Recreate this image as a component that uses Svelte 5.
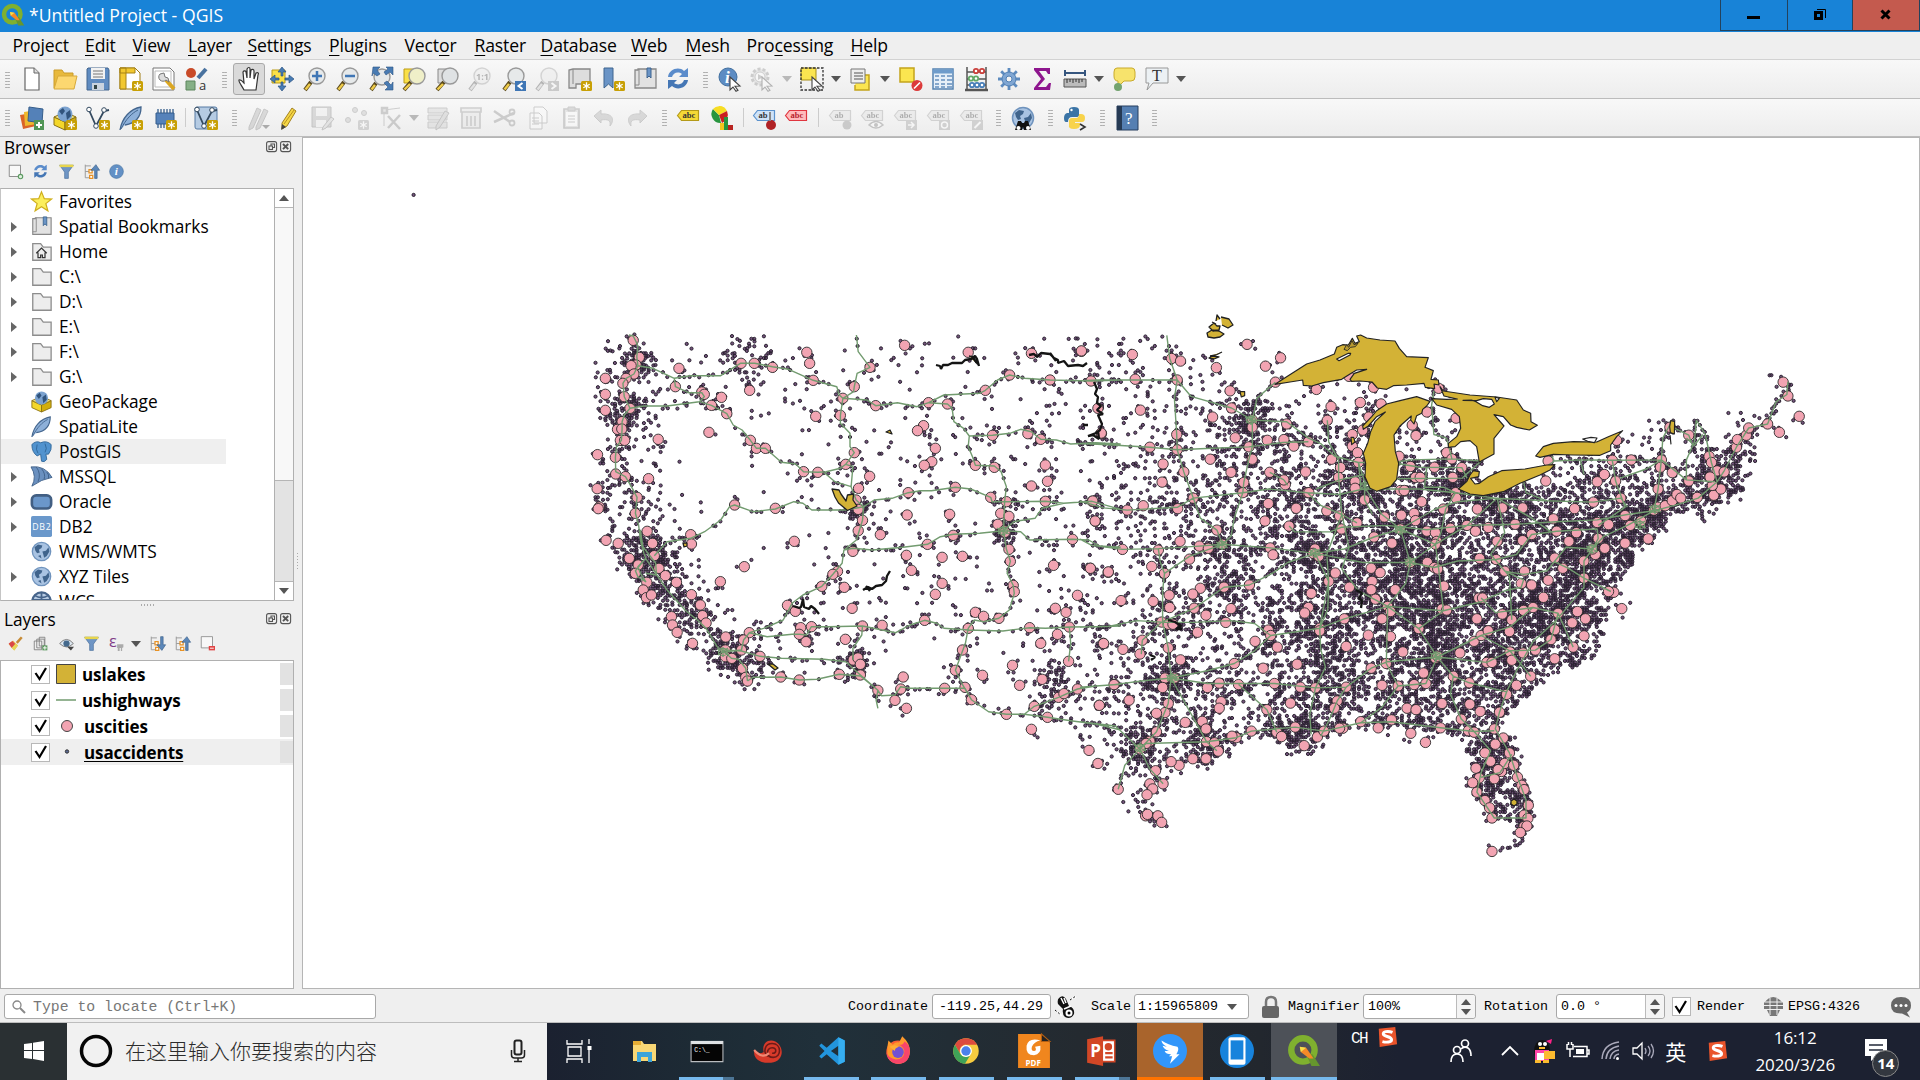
<script>
  // ---------- icon building blocks (24 x 24 grid) ----------
  const star = '<rect x="13" y="14" width="11" height="10" rx="1.5" fill="#c8a005"/><path d="M18.5 15.3v7.4M15.3 17.2l6.4 3.6M15.3 20.8l6.4-3.6" stroke="#fff" stroke-width="1.3"/>';
  const cursor = '<path d="M12 10l10 9-5 .3 3 4-2 1-3-4.300-3 3z" fill="#fff" stroke="#444" stroke-width="1.100"/>';
  const glass = (cx = 14, cy = 9, f = '#e6e9ea') =>
    `<path d="M${cx - 6} ${cy + 6}L2 23" stroke="#5b4a1c" stroke-width="4"/><path d="M${cx - 7} ${cy + 8}L2.500 22.500" stroke="#f0cd4b" stroke-width="2.400"/><circle cx="${cx}" cy="${cy}" r="8" fill="${f}" stroke="#999" stroke-width="1.400"/>`;
  const globe = '<circle cx="12" cy="12" r="10.500" fill="#a9c3e2" stroke="#6f93bd" stroke-width="1.500"/><path d="M4 7l4-3 5 1-1 3-3 2 1 3-3 1-2-3zM13 12l4-1 3-4 1 5-3 5-3 2-1-4zM8 17l3-1 1 4z" fill="#40648c"/>';
  const tag = (f, s, t = 'abc', c = '#333') =>
    `<path d="M1.500 9.500l4-5h17v10h-17z" fill="${f}" stroke="${s}" stroke-width="1.200"/><text x="6.500" y="12.300" font-family="Liberation Serif, serif" font-size="8.500" font-weight="bold" fill="${c}">${t}</text>`;
  const pin = '<circle cx="19" cy="19" r="5" fill="#b02225"/><path d="M18 6v9" stroke="#888" stroke-width="2"/>';
  const refresh = '<path d="M2 10C3 2 13-1 18 4l4-3v9h-9l3-3c-4-3-9-1-10 3z" fill="#5b8ccb"/><path d="M22 13c-1 8-11 11-16 6l-4 3v-9h9l-3 3c4 3 9 1 10-3z" fill="#4577b5"/>';
  const folder = '<path d="M2 3h9l3 4h9v15H2z" fill="#ededed" stroke="#8d8d8d" stroke-width="1.500"/>';
  const page = '<path d="M5 1h9l5 5v17H5z" fill="#fff" stroke="#666" stroke-width="1.200"/><path d="M14 1v5h5" fill="#ddd" stroke="#666"/>';
  const box = '<path d="M1 11l11 5v8L1 19z" fill="#f4d72a" stroke="#8a7115"/><path d="M23 11l-11 5v8l11-5z" fill="#d2ae0c" stroke="#8a7115"/><path d="M1 11l11-5 11 5-11 5z" fill="#efdf79" stroke="#8a7115"/><circle cx="12" cy="8" r="7.500" fill="#7ba2cf"/><path d="M6 5l4-3 2 3-3 4zM13 7l4-3 1 6-4 4z" fill="#31547d"/>';
  const feather = '<path d="M1 24C3 12 11 3 22 1c0 9-4 16-16 18" fill="#8db0d9" stroke="#43658d" stroke-width="1.300"/><path d="M2 23C7 13 13 7 19 4" stroke="#43658d" fill="none"/>';
  const funnel = '<path d="M1 2h22l-8 11v10H9V13z" fill="#6e95c5" stroke="#476d98"/><path d="M1 1h22v4H1z" fill="#e7d54d"/>';
  const tree = '<path d="M2 1v21M2 3h9M2 12h6M2 22h7" stroke="#999" stroke-width="1.500"/><path d="M8 9h5v5H8zM9 18h5v5H9z" fill="#fff" stroke="#e89225" stroke-width="2"/>';
  const expand = '<path d="M17 23V10h-6l8-9 6 9h-4v13z" fill="#5b87b9" stroke="#385d86"/>';
  const collapse = '<path d="M17 1v13h-6l8 9 6-9h-4V1z" fill="#5b87b9" stroke="#385d86"/>';
  const vee = '<path d="M3 4l7 16 8-15 5-1" fill="none" stroke="#344a60" stroke-width="1.800"/><circle cx="3" cy="3.500" r="2.300" fill="#fff" stroke="#344a60"/><circle cx="10" cy="20" r="2.300" fill="#fff" stroke="#344a60"/><circle cx="18" cy="4" r="2.300" fill="#fff" stroke="#344a60"/>';
  const S = '<path d="M3 3L21 1l2 19-19 3z" fill="#e9542b"/><path d="M18 7c-5-2-11-1-10 2 1 3 9 2 9 6 0 3-6 3-10 2" fill="none" stroke="#fff" stroke-width="3.200"/>';

  const icons = {
    page,
    open: '<path d="M1 21V3h8l2 3h9v4" fill="#e8b93c" stroke="#ca9b28"/><path d="M1 22L5 9h19l-3 13z" fill="#fcd770" stroke="#d7a93a"/>',
    save: '<path d="M2 1h20l1 2v20H1V2z" fill="#5f8bc0" stroke="#45678f"/><path d="M5 1h14v11H5z" fill="#f2f2f2"/><path d="M7 4h10M7 7h10M7 10h10" stroke="#777"/><path d="M6 16h12v7H6z" fill="#c9d3df"/><path d="M8 18h3v4H8z" fill="#344"/>',
    layout: '<path d="M1 1h15l5 5v16H1z" fill="#fff" stroke="#9f7c12"/><path d="M1 1h6v21H1zM1 1h15v5H1z" fill="#f2c830" stroke="#a78317"/>' + star,
    manager: '<path d="M1 1h17l4 4v18H1z" fill="#fff" stroke="#777"/><path d="M3 4h16v16H3z" fill="none" stroke="#bbb"/><path d="M14 13l8 9" stroke="#dba722" stroke-width="4"/><path d="M8 7a4 4 0 1 0 6 6l3 2-1-4-3-1-1-4z" fill="#ddd" stroke="#777"/>',
    style: '<circle cx="6" cy="6" r="5" fill="#c94b29"/><path d="M13 11l8-9" stroke="#49729f" stroke-width="4"/><path d="M1 14h9v9H1z" fill="#86b086" stroke="#5c855d"/><text x="14" y="23" font-size="13" font-family="Open Sans, sans-serif" fill="#333">a</text>',
    hand: '<path d="M7 23C5 19 1 14 2 13c2-1 4 2 5 3L6 5c1-2 3-1 3 0l1 6V2c1-2 3-2 3 0v9l1-8c1-1 3-1 3 1v8l2-6c2-1 3 0 2 2l-2 15z" fill="#fff" stroke="#333" stroke-width="1.200"/>',
    pansel: '<path d="M2 3h13v13H2z" fill="#fae048" stroke="#bb9b14"/><path d="M12 0l4 5h-3v4h-2V5H8zM12 24l4-5h-3v-4h-2v4H8zM0 12l5-4v3h4v2H5v3zM24 12l-5-4v3h-4v2h4v3z" fill="#487bb3" stroke="#2d5584" stroke-width=".7"/>',
    zin: glass() + '<path d="M14 4v10M9 9h10" stroke="#3f76b5" stroke-width="2.500"/>',
    zout: glass() + '<path d="M9 9h10" stroke="#3f76b5" stroke-width="2.500"/>',
    zfull: glass(13, 10) + '<path d="M4 0h7L8 3l3 4-3 2-4-3-1 3zM24 0v8l-3-3-4 3-2-3 4-3-2-2zM24 23h-8l3-3-4-4 3-2 4 4 2-3z" fill="#487bb3" stroke="#2d5584" stroke-width=".6"/>',
    zsel: '<path d="M2 2h14v14H2z" fill="#fae048" stroke="#bb9b14"/>' + glass(15, 9, '#efefc8'),
    zlay: '<path d="M3 2h12v14H3z" fill="#ddd" stroke="#888"/>' + glass(15, 9, '#dfe2e4'),
    z11: glass() + '<text x="8" y="13" font-size="9" font-weight="bold" fill="#444" font-family="Open Sans, sans-serif">1:1</text>',
    zlast: glass() + '<path d="M13 14h11v10H13z" fill="#3f76b5"/><path d="M20.500 16l-4 3 4 3" fill="none" stroke="#fff" stroke-width="2"/>',
    znext: glass() + '<path d="M13 14h11v10H13z" fill="#888"/><path d="M16.500 16l4 3-4 3" fill="none" stroke="#fff" stroke-width="2"/>',
    newview: '<path d="M5 2h17v15H8v4H1V3l4-1z" fill="#ddd" stroke="#888" stroke-width="1.300"/><path d="M5 2v15" stroke="#888"/>' + star,
    newbook: '<path d="M3 1h9v20l-4.500-4L3 21z" fill="#6a94c6" stroke="#3e658f"/>' + star,
    book: '<path d="M5 2h18v19H2V3h3z" fill="#e2e2e2" stroke="#888" stroke-width="1.300"/><path d="M6 2v16H2" stroke="#888" fill="none"/><path d="M14 1h4v10l-2-2-2 2z" fill="#6a94c6" stroke="#3e658f"/>',
    refresh,
    info: '<circle cx="10" cy="10" r="9" fill="#5d8cc3" stroke="#42709f"/><text x="7" y="16" font-family="Liberation Serif, serif" font-size="17" font-style="italic" font-weight="bold" fill="#fff">i</text>' + cursor,
    action: '<circle cx="10" cy="10" r="8" fill="#ccc" stroke="#888" stroke-width="3" stroke-dasharray="3 2"/><circle cx="10" cy="10" r="5" fill="#fff" stroke="#888"/><path d="M8 7l5 3-5 3z" fill="#888"/>' + cursor,
    select: '<path d="M1 1h15v12H1z" fill="#fbe550" stroke="#a78e19"/><path d="M1 1h22v22H1z" fill="none" stroke="#333" stroke-width="1.300" stroke-dasharray="2.500 1.500"/>' + cursor,
    form: '<path d="M9 8h11v15H6v-5" fill="#fbe550" stroke="#c3a41b" stroke-width="1.500"/><path d="M2 2h14v14H2z" fill="#eee" stroke="#777"/><path d="M5 6h9M5 9h9M5 12h9" stroke="#888" stroke-width="1.500"/>',
    desel: '<path d="M1 1h14v14H1z" fill="#fbe550" stroke="#c3a41b" stroke-width="1.500"/><circle cx="18" cy="18.500" r="5.500" fill="#dc3a3a"/><path d="M15 21.500l6-6" stroke="#fff" stroke-width="1.600"/>',
    table: '<path d="M2 2h20v20H2z" fill="#e6eff8" stroke="#5583b1" stroke-width="1.500"/><path d="M2 4.500h20" stroke="#6f9ccb" stroke-width="4"/><path d="M4 9h4M10 9h4M16 9h5M4 13h4M10 13h4M16 13h5M4 17h4M10 17h4M16 17h5M4 20h4M10 20h4M16 20h5" stroke="#6690bd" stroke-width="1.500"/>',
    abacus: '<path d="M3 0v22M22 0v22M3 5h19M3 12h19M3 18h19" stroke="#555" stroke-width="1.500"/><path d="M1 23h23" stroke="#555" stroke-width="2.500"/><g fill="#fff" stroke-width="1.800"><g stroke="#c9403c"><circle cx="12" cy="4" r="2.200"/><circle cx="18" cy="4" r="2.200"/></g><g stroke="#63a967"><circle cx="7" cy="11.500" r="2.200"/><circle cx="12" cy="11.500" r="2.200"/></g><g stroke="#477eb8"><circle cx="8" cy="18" r="2.200"/><circle cx="13" cy="18" r="2.200"/><circle cx="18" cy="18" r="2.200"/></g></g>',
    gear: '<path d="M12 1v22M1 12h22M4.200 4.200l15.600 15.600M4.200 19.800L19.800 4.200" stroke="#5d8bbf" stroke-width="2.800"/><circle cx="12" cy="12" r="7" fill="#7fa6d3" stroke="#4f7fb4"/><circle cx="12" cy="12" r="3" fill="#f3f3f3" stroke="#4f7fb4"/>',
    sigma: '<path d="M4 1h16v6h-2l-2-3H9l6 8-7 8h8l3-4h2l-1 7H4v-2l7-9-7-9z" fill="#8e168e"/>',
    ruler: '<path d="M2 6h20M2 3v6M22 3v6" stroke="#36567f" stroke-width="2"/><path d="M1 12h22v8H1z" fill="#bbb" stroke="#555"/><path d="M4 12v4M7 12v3M10 12v4M13 12v3M16 12v4M19 12v3" stroke="#333"/>',
    tip: '<path d="M5 1h15q3 0 3 4v5q0 4-4 4h-7l-6 6v-6q-4 0-4-5V5q0-4 3-4z" fill="#f7e36c" stroke="#c9aa2b"/><circle cx="6" cy="20" r="4" fill="#73a36f"/>',
    text: '<path d="M1 1h22v15H8l-6 7 2-7H1z" fill="#ecf1f4" stroke="#999"/><text x="7" y="14" font-size="16" font-family="Liberation Serif, serif" fill="#333">T</text>',
    source: '<path d="M0 9l12-2 4 13-13 3z" fill="#da6327"/><path d="M4 6l13-2v14l-12 2z" fill="#efb82d"/><path d="M9 1l14 2-1 14-14-2z" fill="#5481b8" stroke="#365e8b"/><path d="M14 14h10v10H14z" fill="#519656"/><path d="M19 16v6M16 19h6" stroke="#fff" stroke-width="2"/>',
    gpkg: box + star, shp: vee + star, spatialite: feather + star,
    memory: '<path d="M3 7h18v11H3z" fill="#5582ba" stroke="#355d8b"/><path d="M5 3v4M8 3v4M11 3v4M14 3v4M17 3v4M20 3v4M5 18v4M8 18v4M11 18v4" stroke="#355d8b" stroke-width="1.300"/>' + star,
    virtual: '<rect x="1" y="1" width="22" height="22" rx="2" fill="#b5cbe3" stroke="#577ba4"/>' + vee + star,
    pencils: '<path d="M2 21L10 2l4 2-8 18-4 2zM9 21l8-18 4 2-8 17-4 2z" fill="#aaa" stroke="#777"/><path d="M15 19h8l-4 4z" fill="#333"/>',
    pencil: '<path d="M4 17L14 2l4 3-9 15-5 3z" fill="#f5d745" stroke="#a38122"/><path d="M4 18l-1 6 5-3z" fill="#444"/><path d="M6 18L16 4" stroke="#ba9222"/>',
    saveedit: '<path d="M1 1h19v20H1z" fill="#aaa" stroke="#777"/><path d="M5 2h11v8H5zM5 14h10v7H5z" fill="#eee"/><path d="M12 21l8-10 3 2-8 9-4 2z" fill="#ccc" stroke="#777"/>',
    points: '<g fill="#bbb" stroke="#888"><circle cx="10" cy="4" r="2.500"/><circle cx="3" cy="14" r="2.500"/><circle cx="19" cy="7" r="2.500"/></g>' + star,
    vertex: '<path d="M6 20L6 4l16-2" stroke="#888" fill="none"/><path d="M4 2h5v5H4zM10 10l12 13M22 9L10 22" fill="#ccc" stroke="#888" stroke-width="2.500"/>',
    attrs: '<path d="M1 2h19v5H1zM1 9h19v5H1zM1 16h19v6H1z" fill="#ccc" stroke="#888"/><path d="M9 20l9-15 4 2-9 14-4 3z" fill="#bbb" stroke="#777"/>',
    trash: '<path d="M3 6h18v16H3zM2 2h20v4H2zM8 10v10M12 10v10M16 10v10" fill="#e8e0e0" stroke="#998c8c" stroke-width="1.700"/>',
    cut: '<path d="M1 5l16 11M1 16L21 7" stroke="#888" stroke-width="2.500"/><circle cx="19" cy="6" r="2.500" fill="none" stroke="#888" stroke-width="1.800"/><circle cx="19" cy="17" r="2.500" fill="none" stroke="#888" stroke-width="1.800"/>',
    copy: '<path d="M8 1h9l4 4v12H8zM4 7h9l3 3v13H4z" fill="#fff" stroke="#888"/><path d="M6 12h7M6 15h7M6 18h7" stroke="#888"/>',
    paste: '<path d="M5 3h15v19H5z" fill="#ccc" stroke="#888" stroke-width="1.700"/><path d="M7 6h11v14H7z" fill="#fff"/><path d="M9 1h7v4H9zM9 10h7M9 13h7M9 16h7" stroke="#888" fill="#aaa"/>',
    undo: '<path d="M2 10l7-6v4c12-1 14 6 9 12 1-6-2-7-9-6v3z" fill="#aaa" stroke="#888"/>',
    redo: '<path d="M22 10l-7-6v4C3 7 1 14 6 20c-1-6 2-7 9-6v3z" fill="#aaa" stroke="#888"/>',
    label: tag('#f5d936', '#b49a18'),
    diagram: '<path d="M9 9V0a9 9 0 0 1 8 5z" fill="#f7dd24"/><path d="M9 9l8-4a9 9 0 0 1-5 12z" fill="#c91f1f"/><path d="M9 9l2 8A9 9 0 0 1 3 3z" fill="#28953f"/><path d="M3 3a9 9 0 0 1 12-1L9 9z" fill="#f7dd24"/><path d="M10 17h4v7h-4z" fill="#f4c51d"/><path d="M14 11h4v13h-4z" fill="#28953f"/><path d="M18 19h5v5h-5z" fill="#b82420"/>',
    pinlab: tag('#cfe2f7', '#5b92cd', 'ab') + pin,
    redlab: tag('#fbb', '#e0353f', 'abc', '#b8232b'),
    g1: tag('#ddd', '#999', 'ab') + '<circle cx="19" cy="19" r="4.500" fill="#888"/>',
    g2: tag('#ddd', '#999') + '<path d="M9 19q7-7 14 0-7 6-14 0z" fill="#fff" stroke="#777" stroke-width="1.500"/><circle cx="16" cy="19" r="2" fill="#777"/>',
    g3: tag('#ddd', '#999') + '<path d="M13 14h11v10H13z" fill="#999"/><path d="M15 19h6m-3-3l3 3-3 3" stroke="#fff" stroke-width="1.500" fill="none"/>',
    g4: tag('#ddd', '#999') + '<path d="M13 14h11v10H13z" fill="#999"/><circle cx="18.500" cy="19" r="3" stroke="#fff" stroke-width="1.500" fill="none"/>',
    g5: tag('#ddd', '#999') + '<path d="M13 14h11v10H13z" fill="#999"/><path d="M15.500 22l6-6" stroke="#fff" stroke-width="2"/>',
    metasearch: globe + '<path d="M4 24l3-9h3l1 2h2l1-2h3l3 9h-7l-1-3-1 3z" fill="#111"/><circle cx="7.500" cy="22" r="2" fill="#fff"/><circle cx="17" cy="22" r="2" fill="#fff"/>',
    python: '<path d="M6 7V4q0-3 5-3t5 3v5q0 2-3 2H9q-4 0-4 5H3q-2 0-2-4t3-5h8" fill="#3b74a6"/><path d="M16 8h2q4 0 4 4t-3 4h-7v1h5v2q0 4-6 4t-5-4v-4q0-3 3-3h4q3 0 3-4z" fill="#f8d34b"/><circle cx="8.500" cy="4" r="1.200" fill="#fff"/><path d="M17 18l5 3-5 3" stroke="#333" fill="none" stroke-width="1.600"/>',
    help: '<path d="M2 0h21v24H2z" fill="#557fb2" stroke="#263f5e"/><path d="M2 0h5v24H2z" fill="#263a54"/><text x="10" y="18" font-size="17" font-family="Liberation Serif, serif" fill="#fff">?</text>',
    // tree and panel icons
    fav: '<path d="M12 1l3.200 7.800 8.300.4-6.500 5.200 2.300 8.200L12 18l-7.300 4.600L7 14.400.5 9.200l8.300-.4z" fill="#fcef5b" stroke="#cfae1c" stroke-width="1.400"/>',
    folder,
    home: folder + '<path d="M6 14l6-6 6 6M8 13v6h3v-3h2v3h3v-6" fill="none" stroke="#333" stroke-width="1.400"/>',
    box, feather,
    pg: '<path d="M1 4q5-5 10-2 7-3 12 2 1 6-3 11h-3l1 6q-3 4-6 2l-1-8-4 2Q1 13 1 4z" fill="#5193cf" stroke="#2e6597"/><path d="M7 4q-2 6 1 10M16 3q3 6 0 10" fill="none" stroke="#2e6597"/>',
    mssql: '<path d="M0 1q16-2 24 12Q12 15 1 23 7 12 0 1z" fill="#6a90bf" stroke="#3d5e86"/><path d="M6 1q6 8 2 17M12 3q5 6 3 12M18 7q3 3 2 7" stroke="#3d5e86" fill="none"/>',
    oracle: '<rect x="1" y="5" width="22" height="15" rx="5" fill="#6b97ca" stroke="#425f83" stroke-width="3"/>',
    db2: '<rect width="24" height="24" rx="2" fill="#6a98cb"/><text x="1.500" y="15.500" font-size="10" fill="#fff" font-family="Open Sans, sans-serif" textLength="21">DB2</text>',
    globe,
    wcs: '<circle cx="12" cy="12" r="10.500" fill="#b7cbe3" stroke="#47658b" stroke-width="2.500"/><path d="M1 10h22M12 1v22M4 5q8 5 16 0" stroke="#47658b" stroke-width="2" fill="none"/>',
    add: '<path d="M2 2h18v18H2z" fill="#f8f8f8" stroke="#777" stroke-width="1.300"/><circle cx="20" cy="20" r="3.500" fill="#dff0df" stroke="#5c9b61" stroke-width="1.800"/>',
    rem: '<path d="M2 1h18v18H2z" fill="#f8f8f8" stroke="#888" stroke-width="1.300"/><path d="M14 16h10v7H14z" fill="#e04444"/><path d="M16 19.500h6" stroke="#fff" stroke-width="1.500"/>',
    funnel, up: tree + expand, down: tree + collapse,
    i: '<circle cx="12" cy="12" r="11" fill="#6390c5" stroke="#44719f"/><text x="9" y="18" font-family="Liberation Serif, serif" font-size="18" font-style="italic" font-weight="bold" fill="#fff">i</text>',
    brush: '<path d="M14 11l8-9" stroke="#c78b36" stroke-width="4"/><path d="M8 7l8 8-6 8L1 13z" fill="#e9bd54"/><path d="M1 12l6-4 5 5-6 6z" fill="#da4848"/><path d="M10 23l6-8-4-3-6 7z" fill="#e8d659"/>',
    group: '<path d="M2 8h12v14H2zM6 5h12v14H6zM10 2h9v14h-9z" fill="none" stroke="#777" stroke-width="1.300"/><path d="M15 15h8v8h-8z" fill="#5b9a5e"/><path d="M19 16v6M16 19h6" stroke="#fff" stroke-width="1.500"/>',
    eye: '<path d="M1 12q11-13 22 0-11 11-22 0z" fill="#dfe9f2" stroke="#777" stroke-width="1.500"/><circle cx="12" cy="12" r="5" fill="#44698d"/><path d="M13 17h11l-5 6z" fill="#444"/>',
    eps: '<text x="0" y="17" font-size="26" fill="#803c87" font-family="Open Sans, sans-serif">ε</text><path d="M13 13h10v5l-2 1v5h-2v-5h-2v5h-3v-5h-1z" fill="#aaa"/>',
    // taskbar
    explorer: '<path d="M1 2h9l2 3h12v17H1z" fill="#f8d775"/><path d="M1 2h8v4H1z" fill="#e5ad35"/><path d="M5 23V13h15v10h-4v-5H9v5z" fill="#3ba4d9"/>',
    cmd: '<path d="M-3 3h30v19H-3z" fill="#050505" stroke="#b9bcbf"/><path d="M-3 4h30" stroke="#dfe2e4" stroke-width="3"/><text x="0" y="13" font-size="6" fill="#fff" font-family="Liberation Mono, monospace">C:\\_</text>',
    spiral: '<path d="M-2 11q4 5 9 2C5 5 11 0 18 3c9 5 8 19-4 20C3 24-3 19-2 11z" fill="#d73a2a"/><path d="M11 17c-5-4-3-12 4-12 9 0 9 13 1 13-7 0-7-9-1-9 5 0 4 6 0 5" fill="none" stroke="#6c1b18" stroke-width="1.500"/><path d="M-2 11q8 9 14 3" stroke="#f08a75" stroke-width="2" fill="none"/>',
    code: '<path d="M18-1L7 9 2 5 0 7l5 5-5 5 2 2 5-4 11 10 6-3V2zM18 7v10l-7-5z" fill="#2295dd" fill-rule="evenodd"/><path d="M18-1v26l6-3V2z" fill="#36aef0"/>',
    firefox: '<circle cx="12" cy="13" r="11" fill="#fb5f32"/><path d="M2 8L3 2l4 4q3-3 6-2l3-6q8 7 7 15-1 11-11 11Q3 23 2 15z" fill="#fe9a2c"/><path d="M1 13q2 6 9 7 8 0 8-8-1-5-6-6 5 1 6-3 6 3 5 11-1 10-12 10Q2 23 1 13z" fill="#f7456b"/><circle cx="12" cy="13" r="5.500" fill="#7350d4"/><path d="M4 8q5-3 9 0-4 1-4 4z" fill="#ffae36"/>',
    chrome: '<circle cx="12" cy="12" r="12" fill="#f6cb3f"/><path d="M1.600 6A12 12 0 0 1 22.400 6H12a6 6 0 0 0-5.500 8.500z" fill="#dd4b3e"/><path d="M1.600 6A12 12 0 0 0 11 24l5.500-9A6 6 0 0 1 6.800 15z" fill="#3fa358"/><circle cx="12" cy="12" r="5.600" fill="#fff"/><circle cx="12" cy="12" r="4.400" fill="#4a80eb"/>',
    foxit: '<path d="M-3-4h21l9 8v24H-3z" fill="#f0861e"/><path d="M19-4v7h8z" fill="#222" stroke="#b15e14"/><path d="M18 2Q7-1 5 7q-1 9 7 9 7-1 6-9l-5 1q2 4-1 4-3 0-2-4 2-5 8-6z" fill="#fff"/><text x="4" y="26" font-size="7.500" font-weight="bold" fill="#fff" font-family="Open Sans, sans-serif">PDF</text>',
    ppt: '<path d="M12 2h12v20H12z" fill="#fff" stroke="#d24726" stroke-width="1.500"/><path d="M15 14h7M15 18h7" stroke="#d24726" stroke-width="2"/><circle cx="18" cy="8" r="3.500" fill="#d24726"/><path d="M-2 1L13-2v28L-2 23z" fill="#d24726"/><text x="1" y="18" font-size="16" font-weight="bold" fill="#fff" font-family="Open Sans, sans-serif">P</text>',
    wing: '<circle cx="12" cy="12" r="16" fill="#3296fa"/><path d="M4 2q6 4 15 6 2 2-1 7h3L12 24l2-7h-3l2-2q-5 0-6-3l4 0Q6 10 5 7l4 1Q4 5 4 2z" fill="#fff"/>',
    phone: '<circle cx="12" cy="12" r="16" fill="#1783dc"/><rect x="4" y="-1" width="16" height="26" rx="2" fill="#fff"/><path d="M6 2h12v18H6z" fill="#1783dc"/>',
    q: '<circle cx="11" cy="11" r="11" fill="none" stroke="#7fb02f" stroke-width="6"/><path d="M14 15h6l7 11h-8z" fill="#66962e"/><path d="M8 8l6 1 7 10h-4L9 13z" fill="#f58a28"/><path d="M8 8l6 1-5 4z" fill="#f6e04a"/>',
    sogou: S
  };

  // ---------- toolbars: [icon, centre x, disabled] ----------
  const rows = [
    [['|', 7], ['page', 32], ['open', 65], ['save', 98], ['layout', 131], ['manager', 164], ['style', 197], ['|', 224], ['hand', 249], ['pansel', 282], ['zin', 315], ['zout', 348], ['zfull', 381], ['zsel', 414], ['zlay', 447], ['z11', 480, 1], ['zlast', 514], ['znext', 547, 1], ['newview', 580], ['newbook', 613], ['book', 645], ['refresh', 678], ['|', 705], ['info', 730], ['action', 762, 1], ['v', 787, 1], ['select', 812], ['v', 836], ['form', 861], ['v', 885], ['desel', 911], ['table', 943], ['abacus', 976], ['gear', 1009], ['sigma', 1042], ['ruler', 1075], ['v', 1099], ['tip', 1124], ['text', 1157], ['v', 1181]],
    [['|', 7], ['source', 32], ['gpkg', 65], ['shp', 98], ['spatialite', 131], ['memory', 165], ['-', 185], ['virtual', 206], ['|', 234], ['pencils', 259, 1], ['pencil', 290], ['saveedit', 323, 1], ['points', 357, 1], ['vertex', 390, 1], ['v', 414, 1], ['attrs', 439, 1], ['trash', 471, 1], ['cut', 505, 1], ['copy', 538, 1], ['paste', 571, 1], ['undo', 604, 1], ['redo', 637, 1], ['|', 664], ['label', 688], ['diagram', 722], ['-', 743], ['pinlab', 764], ['redlab', 796], ['-', 818], ['g1', 840, 1], ['g2', 872, 1], ['g3', 905, 1], ['g4', 938, 1], ['g5', 971, 1], ['|', 998], ['metasearch', 1023], ['|', 1050], ['python', 1075], ['|', 1102], ['help', 1127], ['|', 1154]]
  ].map((row) => {
    let end = 0;
    return row.map(([id, x, off]) => {
      const w = id === '|' ? 6 : id === '-' ? 2 : id === 'v' ? 10 : id === 'hand' ? 32 : 24;
      const gap = x - w / 2 - end;
      end = x + w / 2;
      return { id, off, w, gap };
    });
  });

  const menus = [['', 'P', 'roject', 13, 1], ['', 'E', 'dit', 85.5], ['', 'V', 'iew', 133], ['', 'L', 'ayer', 188.5], ['', 'S', 'ettings', 248], ['', 'P', 'lugins', 329.5], ['Vect', 'o', 'r', 405], ['', 'R', 'aster', 475], ['', 'D', 'atabase', 541], ['', 'W', 'eb', 631.500], ['', 'M', 'esh', 686], ['Pro', 'c', 'essing', 747], ['', 'H', 'elp', 851], ['', '', '', 901]];

  const tree_ = [['Favorites', 'fav', 0], ['Spatial Bookmarks', 'book', 1], ['Home', 'home', 1], ['C:\\', 'folder', 1], ['D:\\', 'folder', 1], ['E:\\', 'folder', 1], ['F:\\', 'folder', 1], ['G:\\', 'folder', 1], ['GeoPackage', 'box', 0], ['SpatiaLite', 'feather', 0], ['PostGIS', 'pg', 0], ['MSSQL', 'mssql', 1], ['Oracle', 'oracle', 1], ['DB2', 'db2', 1], ['WMS/WMTS', 'globe', 0], ['XYZ Tiles', 'globe', 1], ['WCS', 'wcs', 0]];
  const layers = ['uslakes', 'ushighways', 'uscities', 'usaccidents'];
  const tasks = ['explorer', 'cmd', 'spiral', 'code', 'firefox', 'chrome', 'foxit', 'ppt', 'wing', 'phone', 'q'];

  const west = (x, y) => [560 + x / 2.8, 300 + y / 3];
  const east = (x, y) => [1080 + x / 2.119, 300 + y / 2.751];
  const parse = (s, f) => s.trim().split(/\s+/).map((p) => f(...p.split(',').map(Number)));

  const cities = [
    ...parse(`205,121 222,172 213,195 199,197 207,222 185,235 127,235 176,250 127,283 180,290 127,331 196,325 333,205 507,190 544,190 595,202 691,157 699,190 709,241 323,260 397,276 404,283 452,292 531,271 424,316 467,341 716,349 417,397 174,365 161,388 173,387 169,421 181,421 275,418 105,464 155,472 156,522 183,530 248,536 104,566 110,621 107,626 216,592 211,640 244,694 129,721 163,730 259,730 366,704 368,732 194,775 264,767 219,795 211,820 277,805 295,827 326,847 243,847 233,870 242,893 256,885 368,884 393,915 399,947 312,950 315,975 328,997 409,969 371,1030 464,1011 463,1050 463,1070 481,1075 530,998 514,1020 508,1050 560,1069 511,1105 520,1132 525,1143 618,1131 670,1140 533,421 550,445 575,445 682,515 722,517 800,493 824,458 785,346 792,295 824,260 868,202 965,136 884,317 1032,308 1085,312 1018,377 1001,392 1051,445 1041,485 1020,496 1143,157 1320,160 1460,154 1259,225 1191,271 1372,240 1487,243 1516,401 1211,406 1310,401 1346,418 1163,496 1216,502 1359,495 1320,558 1365,544 1107,562 975,578 1206,592 1250,605 1359,604 1490,604 1234,640 1257,649 1226,673 1244,692 1246,697 1499,664 1435,718 1091,643 972,645 867,529 836,565 829,600 835,628 847,661 835,692 897,704 656,724 489,615 603,625 516,800 449,845 820,754 777,814 764,823 733,859 796,862 818,925 637,916 659,934 674,983 670,1003 689,1025 704,980 847,978 902,976 799,1018 821,1080 834,1074 841,1093 841,1125 782,1123 890,1171 938,1201 954,1167 970,1225 961,1131 1077,1165 1134,1162 1152,1199 1250,1243 1365,1252 1320,1288 1328,1219 1396,1192 1411,1181 1449,1167 1553,1153 1510,1216 1287,1156 1350,1138 1267,1096 1183,1126 1107,1111 1127,1050 1143,985 1163,937 1186,949 1229,955 1021,961 1051,883 1070,850 984,811 970,766 1070,772 1127,769 1029,733 1101,706 1257,748 1261,784 1269,856 1272,875 1382,796 1485,805 1535,817 1449,886 1387,925 1417,937 1426,981 1315,983 1393,1003 1346,1030 1424,1084 1521,1030`, west),
    ...parse(`3,140 45,366 38,298 27,553 32,608 22,738 60,748 50,945 41,1115 111,150 117,218 194,161 213,168 289,186 354,122 425,159 393,182 206,220 318,250 414,226 128,303 321,297 281,322 365,330 365,350 205,370 329,379 438,341 148,405 206,412 176,451 276,438 358,404 397,386 432,384 453,402 484,390 365,438 220,473 174,501 320,474 402,474 347,502 478,473 345,530 435,508 432,495 482,530 240,545 134,566 100,578 207,574 212,664 90,686 166,688 253,677 272,683 290,633 302,672 399,560 458,573 392,608 443,622 403,682 409,701 485,530 232,713 152,733 179,752 498,685 494,697 506,705 527,774 541,751 490,807 305,790 359,784 255,793 239,809 155,829 189,812 87,827 190,846 242,848 267,867 320,849 173,886 187,892 197,892 309,887 484,846 476,861 249,914 132,936 187,957 127,974 91,961 371,939 399,908 404,923 418,955 508,903 508,910 560,877 564,953 611,922 327,1000 388,1013 460,1002 213,990 72,1058 104,1101 200,1040 180,1040 175,1066 270,1066 295,1054 336,1058 412,1055 467,1065 499,1067 564,1065 617,1013 299,1105 295,1123 187,1110 180,1135 162,1137 223,1162 259,1159 267,1180 396,1127 446,1109 545,1103 539,1123 162,1188 148,1214 140,1220 127,1235 268,1215 285,1218 293,1241 267,1262 239,1262 210,1280 193,1270 160,1295 148,1331 176,1331 154,1345 142,1361 81,1346 139,1419 143,1415 165,1419 173,1437 19,1239 38,1275 331,1204 322,1200 363,1186 417,1189 427,1201 456,1175 475,1226 503,1202 517,1186 557,1178 550,1178 595,1160 632,1177 660,1155 701,1192 732,1217 764,1177 501,246 570,210 622,240 594,282 532,293 524,331 638,286 612,322 599,358 577,370 577,402 588,420 712,373 704,344 735,308 797,325 760,243 533,438 552,461 590,447 548,488 583,500 583,518 603,550 676,430 700,458 711,488 721,488 679,524 687,524 751,460 777,420 788,437 809,461 790,488 796,530 797,545 724,555 770,575 708,587 681,592 645,597 711,607 550,594 554,630 523,580 587,613 679,630 735,636 753,640 785,628 820,620 838,636 865,626 842,575 895,572 938,572 623,652 661,669 756,664 753,672 884,664 922,617 957,645 938,662 700,722 736,722 751,736 758,740 847,711 882,714 617,738 636,750 619,774 617,797 571,790 626,823 668,797 771,787 652,843 658,857 640,877 845,820 853,820 767,850 777,853 841,877 895,864 718,904 658,926 684,968 649,1000 753,985 758,980 805,971 835,939 850,923 865,910 862,997 873,997 728,1026 733,1055 708,1058 674,1062 640,1060 791,1035 825,1053 767,1110 693,1123 712,1127 826,1112 848,1132 904,1085 925,1060 955,1035 889,1134 808,1153 987,498 992,443 1003,602 1048,574 1088,556 1010,636 1052,640 1036,664 1006,710 1023,738 992,771 942,746 900,746 935,780 957,784 982,818 940,854 960,846 915,880 910,912 1013,862 1054,857 1043,888 1071,877 1006,907 1068,924 1045,955 998,934 965,963 939,971 911,968 915,991 1006,987 1148,849 1131,804 1120,802 1068,765 1068,718 1092,700 1086,685 1112,683 1155,669 1204,657 1120,618 1096,612 1098,656 1166,620 1189,608 1155,593 1216,578 1224,570 1240,566 1255,552 1265,535 1273,545 1308,543 1343,537 1358,520 1340,510 1290,498 1225,520 1146,545 1135,498 1111,480 1096,500 1168,440 1128,441 1137,386 1232,440 1255,475 1230,460 1333,430 1338,447 1350,470 1365,473 1250,350 1290,372 1391,405 1393,384 1412,372 1417,352 1457,341 1482,364 1500,264 1490,226 1524,320 1335,487 823,1185 835,1189 878,1180 897,1205 880,1222 910,1246 858,1246 870,1269 839,1288 893,1297 900,1275 919,1280 927,1313 878,1317 846,1315 832,1328 841,1354 936,1335 941,1347 858,1377 868,1397 873,1425 950,1390 941,1417 949,1426 941,1448 947,1447 933,1465 873,1517 886,1292`, east)
  ];

  const roadsW = [
    '193,105 205,108 213,125 218,140 215,170 218,197 207,222 185,235 176,250 180,290 196,325 180,345 174,365 174,387 172,421 158,440 155,472 156,515 183,530 200,560 216,592 211,640 220,675 225,720 235,760 240,775 218,800 225,820 240,845 218,830 211,812 240,775',
    '240,775 268,820 300,870 350,930 390,965 409,985 440,1040 460,1055 480,1075 500,1078 520,1105 525,1143',
    '225,690 232,740 250,765 268,790 270,825 240,820',
    '218,197 260,205 320,235 365,227 450,227 505,190 545,190 595,200 640,208 709,241 775,260 782,285 792,295 860,300 884,317 945,308 1000,320 1032,308 1085,312 1098,325 1103,365 1130,385 1146,408 1143,440 1155,470 1163,496 1216,498 1235,515 1250,560 1245,605 1242,692 1250,748 1261,784 1252,820 1269,856 1272,880 1258,930 1229,955',
    '320,235 323,260 360,278 397,278 404,290 390,305 300,318 235,318 196,325',
    '390,305 424,316 467,341 485,375 510,390 533,421 550,445 575,445 620,487 660,492 682,515 722,517 745,515 785,505 800,493 820,500 815,560 829,600 850,620',
    '740,518 770,545 815,560',
    '830,105 835,155 868,202 832,220 824,260 822,275 792,295 785,346 785,370 812,400 812,440 824,458 800,493',
    '1032,308 1075,285 1175,280 1191,271 1225,240 1259,225 1300,235 1372,240 1487,243 1570,240',
    '1146,408 1211,406 1260,400 1290,388 1320,395 1346,418 1390,420 1430,432 1500,428 1570,432',
    '264,767 300,725 366,715 405,695 450,660 475,620 489,615 540,635 603,627 655,605 680,610 705,630 800,630 850,620 880,600 930,595 975,578 1010,572 1040,572 1107,562 1150,567 1206,592 1210,605 1250,605 1359,604 1410,610 1490,604 1570,628',
    '850,620 847,661 830,720 795,750 790,790 764,823 733,859 680,885 650,910 625,960 570,985 530,998 514,1020 508,1050 463,1055',
    '795,750 820,745 875,750 960,742 1029,733 1065,710 1101,703 1175,700 1242,692 1290,695 1315,720 1435,718 1480,720 1510,738 1570,742',
    '1242,692 1270,665 1330,655 1350,625 1410,610',
    '463,1050 508,1053 560,1069 620,1075 740,1078 800,1085 841,1125 890,1171 885,1200 890,1225',
    '530,998 580,1010 650,1003 670,1003 690,1005 704,980 750,980 847,978 940,998 980,975 1021,961 1055,970 1075,985 1143,990 1240,993 1315,983 1360,985 1426,981 1500,980 1570,978',
    '847,978 845,1005 820,1045 821,1080',
    '525,1143 540,1132 618,1131 670,1140 720,1138 782,1123 841,1128',
    '841,1128 890,1171 900,1187 938,1185 954,1160 980,1165 1077,1165 1134,1165 1152,1199 1200,1235 1250,1243 1300,1243 1365,1252 1430,1262 1500,1272 1570,1290',
    '1300,1243 1328,1219 1396,1192 1449,1167 1500,1158 1570,1153',
    '1229,955 1186,965 1160,960 1143,985 1135,1030 1107,1111 1125,1150 1152,1199',
    '1426,981 1430,1030 1424,1084'
  ].map((s) => parse(s, west));

  const roadsE = [
    '0,222 40,220 117,220 206,220 235,265 321,297 365,330 365,404 358,438 347,502 345,530 327,600 320,650 302,672',
    '184,97 190,160 206,220 200,270 205,370 206,412 220,473 240,545 255,600 290,633 302,672',
    '0,395 60,398 148,405 206,412 280,408 358,404 430,392 484,390',
    '365,330 438,335 484,380 510,395 540,430 590,447 603,500 603,550 620,590',
    '365,330 375,270 414,226',
    '524,331 527,390 548,440 548,488 555,590 523,700 527,774 508,903',
    '0,553 50,572 100,578 207,570 240,545 345,530 400,520 482,530 550,535 600,520 720,520 796,530 880,545 987,552 1088,556 1146,545 1160,570',
    '0,658 25,675 90,686 166,684 253,677 302,672 403,682 498,697 600,722 700,722 751,736 800,718 882,714 925,700 957,645 1010,636 1096,630 1098,656 1086,685',
    '166,684 170,720 179,752 175,800 175,886 187,957 193,1040 187,1110 162,1188 127,1235 95,1280 81,1346',
    '179,752 232,705 302,672',
    '173,886 242,848 305,790 359,784 410,750 440,722 498,697 560,685 623,652 679,630 753,575 800,555 884,545',
    '0,900 60,898 120,882 173,886 240,887 320,882 370,890 404,923 508,903 560,877 652,843 770,855 850,830 900,800 935,790 940,770 900,746',
    '404,923 370,965 327,1000 270,1020 193,1040',
    '0,1065 72,1058 130,1048 193,1040 270,1055 336,1055 412,1055 499,1067 564,1065 617,1013 652,995 757,982 862,997 911,965 965,963 998,934 1013,862',
    '193,1040 268,1215 290,1240',
    '336,1058 396,1127 417,1189',
    '0,1160 75,1172 127,1235 140,1220 268,1215 331,1204 363,1186 456,1175 517,1186 595,1163 660,1160 764,1177 835,1187 878,1185',
    '127,1235 148,1290 176,1331', '132,936 130,974', '173,886 132,936',
    '508,903 510,960 520,1010 499,1067 487,1140 490,1195',
    '564,1065 545,1103 530,1150 510,1200',
    '498,697 527,774 525,850 508,903',
    '443,622 455,638 530,638 555,625 650,620 735,632 820,620 922,617 1010,610 1096,605 1160,590 1216,580',
    '555,590 570,680 555,740 590,800 652,843',
    '603,515 640,590 679,630 700,722 690,780 652,843 649,1000 674,1062 640,1120 595,1163',
    '679,630 753,672 820,620 884,545',
    '700,722 753,672 765,640 775,575 796,530',
    '770,855 760,740 753,672', '652,843 718,904 757,982 791,1035 785,1085 808,1153 835,1187',
    '757,982 733,1055 674,1062', '718,904 770,855',
    '757,982 850,923 910,900 960,846 1013,862 1045,955',
    '791,1035 825,1053 904,1078 925,1020 960,940 1010,880 1068,790 1068,718 1086,685 1110,650 1160,620 1216,580 1260,565 1310,545 1350,500 1365,470 1391,405 1417,352 1457,341 1475,280 1498,260 1500,225',
    '904,1078 889,1134 880,1180 910,1246 927,1313 945,1375 945,1425 878,1425 841,1354 850,1300 870,1240 835,1187',
    '850,1313 890,1300 915,1250', '911,965 955,1035', '850,923 911,965', '960,846 880,860 850,820',
    '884,545 900,640 870,700 910,760 915,880', '884,545 957,600 1000,640', '1068,765 1125,802', '1068,765 1035,738 1005,720 990,745 940,755 900,746',
    '1005,720 1030,680 1086,685', '987,552 945,530 940,500 1005,443 1060,440 1128,441 1232,440 1285,495 1345,500',
    '1128,441 1135,498 1155,570 1098,620', '1145,490 1200,465 1232,440', '1232,440 1225,520 1216,580',
    '1255,330 1235,380 1232,440', '1306,330 1302,390 1285,440 1285,495', '1306,330 1325,370 1338,447 1350,500', '1285,380 1302,400 1320,370', '1255,350 1290,372 1298,400',
    '1060,440 1068,480', '1005,443 1000,430',
    '750,250 745,290 750,370 777,380 788,437 850,443', '788,437 700,440 676,445', '850,443 810,490 660,492', '603,480 550,495 500,520', '590,447 660,447 720,460 809,461 820,490',
    '796,530 770,515 730,515 735,460', '432,495 440,510', '402,474 432,495', '482,530 510,565 555,590 587,613', '590,447 595,510'
  ].map((s) => parse(s, east));
  const roads = [...roadsW, ...roadsE];
  const roadPath = roads.map((r) => 'M' + r.map((p) => p.map((v) => v.toFixed(1)).join(' ')).join('L')).join('');

  // ---------- accident points ----------
  let seed = 20200326;
  const rnd = () => {
    seed = (seed * 1664525 + 1013904223) % 4294967296;
    return seed / 4294967296;
  };
  const land = [[593, 336], [1180, 336], [1215, 365], [1258, 385], [1290, 392], [1330, 380], [1440, 378], [1460, 400], [1462, 470], [1480, 497], [1540, 480], [1562, 455], [1622, 445], [1640, 420], [1735, 420], [1745, 430], [1775, 415], [1760, 435], [1738, 445], [1730, 470], [1742, 492], [1715, 500], [1670, 508], [1656, 520], [1655, 540], [1638, 558], [1622, 572], [1615, 590], [1610, 600], [1603, 635], [1595, 655], [1560, 672], [1530, 695], [1508, 712], [1500, 728], [1510, 750], [1526, 780], [1532, 810], [1526, 828], [1500, 820], [1478, 795], [1472, 760], [1462, 740], [1435, 731], [1400, 728], [1345, 728], [1315, 742], [1280, 738], [1215, 740], [1170, 765], [1152, 785], [1163, 815], [1140, 812], [1120, 780], [1098, 756], [1060, 722], [1020, 715], [965, 702], [900, 697], [862, 682], [790, 675], [740, 680], [712, 655], [668, 640], [640, 600], [608, 548], [594, 510], [593, 420]];
  const within = (x, y, poly) => {
    let c = false;
    for (let i = 0, j = poly.length - 1; i < poly.length; j = i++) {
      const [xi, yi] = poly[i], [xj, yj] = poly[j];
      if (yi > y !== yj > y && x < ((xj - xi) * (y - yi)) / (yj - yi) + xi) c = !c;
    }
    return c;
  };
  const clamp = (v) => Math.max(0, Math.min(1, v));
  const density = (x, y) => {
    const patch = 0.6 + 0.6 * Math.sin(x / 9 + 2.5 * Math.sin(y / 15)) * Math.sin(y / 8 + 2.5 * Math.sin(x / 17));
    let d = 0.035 + 0.09 * clamp((x - 1020) / 80);
    d += 0.22 * clamp((x - 1110) / 90) * clamp((y - 390) / 90);
    d += 0.68 * clamp((x - 1240) / 80) * clamp((y - 470) / 50);
    d += 0.2 * clamp((1610 - y * 0.9 - x) / 200) * clamp((760 - x) / 100) * (y > 480 ? 1 : 0);
    if (x < 660 && y < 470) d += 0.1;
    if (x > 665 && x < 800 && y > 420 && y < 600) d *= 0.15;
    if (y < 405 && x > 1180 && x < 1480) d *= 0.5;
    if (x > 1320 && x < 1440 && y > 690) d *= 0.75;
    if (x > 1560 && y < 465) d *= 0.6;
    return d * (x > 1150 ? Math.max(0.25, patch * 1.5) : 1);
  };
  const dots = [];
  const taken = new Set();
  // keeps at most one point per 2.4 px cell so that dense areas stay grainy
  const put = (x, y) => {
    const key = Math.round(x / 2.4) * 5000 + Math.round(y / 2.4);
    if (taken.has(key)) return;
    taken.add(key);
    const cx = Math.round(x / 2.4) * 2.4 + rnd() * 0.9;
    const cy = Math.round(y / 2.4) * 2.4 + rnd() * 0.9;
    dots.push(`M${cx.toFixed(1)} ${cy.toFixed(1)}m-1.600 0a1.600 1.600 0 1 0 3.200 0a1.600 1.600 0 1 0-3.200 0`);
  };
  for (let i = 0; i < 46000; i++) {
    const x = 590 + rnd() * 1190, y = 334 + rnd() * 496;
    if (rnd() < density(x, y) && within(x, y, land)) put(x, y);
  }
  // metro areas: x, y, spread, count
  [[637, 363, 10, 80], [624, 412, 12, 80], [640, 555, 15, 100], [655, 560, 16, 110], [672, 590, 14, 70], [695, 610, 10, 60], [723, 650, 14, 110], [745, 665, 13, 70], [748, 355, 16, 36], [732, 358, 10, 14], [857, 510, 9, 40], [855, 662, 10, 45], [1003, 532, 9, 50], [1053, 685, 15, 50], [1172, 676, 16, 140], [1140, 746, 15, 100], [1208, 740, 16, 140], [1251, 420, 13, 100], [1222, 545, 11, 70], [1315, 553, 12, 80], [1362, 490, 13, 80], [1458, 475, 14, 80], [1436, 655, 18, 170], [1497, 497, 15, 90], [1590, 548, 16, 130], [1630, 525, 16, 170], [1655, 512, 12, 110], [1580, 570, 14, 90], [1720, 475, 16, 110], [1700, 495, 17, 80], [1740, 450, 12, 30], [1524, 615, 18, 110], [1500, 650, 18, 100], [1560, 605, 22, 150], [1520, 800, 9, 45], [1496, 755, 15, 110], [1484, 785, 9, 50], [1410, 562, 14, 80], [1400, 550, 14, 70], [1435, 530, 15, 80], [1624, 558, 6, 40], [1385, 600, 22, 110], [1320, 650, 22, 90], [1300, 735, 14, 90], [1230, 585, 18, 80], [1350, 440, 26, 70], [1250, 450, 40, 90], [1560, 535, 30, 130], [1440, 590, 30, 150]].forEach(([cx, cy, s, n]) => {
    for (let i = 0; i < n; i++) {
      const a = rnd() * 6.283, r = s * (rnd() + rnd()) * 0.95;
      put(cx + Math.cos(a) * r, cy + Math.sin(a) * r);
    }
  });
  roads.forEach((line) => {
    for (let i = 1; i < line.length; i++) {
      const [a, b] = line[i - 1], [c, d] = line[i];
      const n = Math.floor(Math.hypot(c - a, d - b) / (a > 1180 ? 4 : 7));
      for (let k = 0; k < n; k++) {
        const t = rnd();
        put(a + (c - a) * t + rnd() * 3 - 1.5, b + (d - b) * t + rnd() * 3 - 1.5);
      }
    }
  });
  cities.forEach(([x, y]) => {
    for (let k = 0; k < 3; k++) put(x + rnd() * 16 - 8, y + rnd() * 16 - 8);
  });
  // coastal strips and outliers
  parse('892,1510 897,1508 903,1506 910,1504 918,1500 925,1496 931,1490 936,1484 938,1478 1462,202 1466,206 1485,212 1498,240 1464,300 1470,310 1375,308 1400,310 1430,320 1452,318 1400,520 1405,515 1398,548 1390,523 1378,520 1280,575 1270,579 1262,582 1250,586 1242,588 1288,573 1298,571 1310,568 1145,765 1150,750 1155,745 1158,732 1160,720 1165,708 1155,700 1168,695 93,1380 104,1408', east).forEach(([x, y]) => put(x, y));
  put(413, 195);
  const dotPath = dots.join('');
</script>

{#snippet icon(id, w = 24)}
  <svg class="ic" width={w} height={w} viewBox="0 0 24 24">{@html icons[id]}</svg>
{/snippet}

{#snippet dockHead(title)}
  <div class="dock-head">
    <span>{title}</span>
    <svg width="28" height="12" viewBox="0 0 28 12"><g fill="none" stroke="#555" stroke-width="1.100"><rect x=".6" y=".6" width="10" height="10" rx="2" /><rect x="3" y="5" width="3.500" height="3.500" /><path d="M5 5V3h3.500v3.500H7" /><rect x="14.600" y=".6" width="10" height="10" rx="2" /><path d="M17 3l5.200 5.200M22.200 3L17 8.200" stroke-width="1.900" /></g></svg>
  </div>
{/snippet}

<div class="screen">
  <header class="title">
    <svg width="24" height="24" viewBox="-4 -4 32 32">{@html icons.q}</svg>
    <span>*Untitled Project - QGIS</span>
    <div class="wins">
      <div class="win"><svg width="14" height="14"><path d="M0 9.500h13" stroke="#000" stroke-width="3" /></svg></div>
      <div class="win b"><svg width="14" height="14"><path d="M2.500 4.500h6v6h-6z" fill="none" stroke="#000" stroke-width="3" /><path d="M4 1.500h8.500V10" fill="none" stroke="#000" /></svg></div>
      <div class="win c"><svg width="14" height="14"><path d="M2.500 2.500l8 8M10.500 2.500l-8 8" stroke="#000" stroke-width="3" /></svg></div>
    </div>
  </header>

  <nav class="menu">
    {#each menus.slice(0, -1) as m, i}
      <span style:width="{menus[i + 1][3] - m[3]}px">{m[0]}<u class:plain={m[4]}>{m[1]}</u>{m[2]}</span>
    {/each}
  </nav>

  {#each rows as row, r}
    <div class="toolbar" class:second={r === 1}>
      {#each row as t}
        <div class="tool" class:off={t.off} class:pressed={t.id === 'hand'} style:width="{t.w}px" style:margin-left="{t.gap}px">
          {#if t.id === '|'}<i class="grip"></i>
          {:else if t.id === '-'}<i class="sep"></i>
          {:else if t.id === 'v'}<i class="drop"></i>
          {:else}{@render icon(t.id)}{/if}
        </div>
      {/each}
    </div>
  {/each}

  <div class="work">
    <aside>
      {@render dockHead('Browser')}
      <div class="mini">
        {#each ['add', 'refresh', 'funnel', 'up', 'i'] as n}{@render icon(n, 15)}{/each}
      </div>
      <div class="browser">
        <div class="items">
          {#each tree_ as [name, ic, open]}
            <div class="item" class:hover={name === 'PostGIS'}>
              <i class:arrow={open}></i>{@render icon(ic, 21)}<span>{name}</span>
            </div>
          {/each}
        </div>
        <div class="scroll"><div class="sb"><i class="tri up"></i></div><div class="thumb"></div><div class="track"></div><div class="sb"><i class="tri"></i></div></div>
      </div>
      <i class="hgrip"></i>
      {@render dockHead('Layers')}
      <div class="mini l">
        {#each ['brush', 'group', 'eye', 'funnel', 'eps'] as n}{@render icon(n, 15)}{/each}
        <i class="drop"></i>
        {#each ['down', 'up', 'rem'] as n}{@render icon(n, 15)}{/each}
      </div>
      <div class="layers">
        {#each layers as name, i}
          <div class="layer" class:sel={i === 3}>
            <span class="check"><svg width="14" height="14"><path d="M1.500 6l4 6L12 1" fill="none" stroke="#000" stroke-width="2.200" /></svg></span>
            <svg width="22" height="20">
              {#if i === 0}<path d="M1.500.5h19v19h-19z" fill="#d3b236" stroke="#444" />
              {:else if i === 1}<path d="M1 10h20" stroke="#729b6f" stroke-width="1.500" />
              {:else if i === 2}<circle cx="12" cy="10" r="5.500" fill="#f2a4b2" stroke="#444" />
              {:else}<circle cx="12" cy="9.500" r="1.700" fill="#5b6a94" stroke="#333" />{/if}
            </svg>
            <b class:in={i > 1}>{name}</b><i></i>
          </div>
        {/each}
      </div>
    </aside>
    <i class="vgrip"></i>
    <main>
      <svg width="1616" height="850" viewBox="303 138 1616 850">
        <path d={dotPath} fill="#74537c" stroke="#2a2230" stroke-width="1" />
        <g fill="#f2a4b2" stroke="#2d2a2b" stroke-width=".9">
          {#each cities as [x, y]}<circle cx={x} cy={y} r="5.200" />{/each}
        </g>
        <path d={roadPath} fill="none" stroke="#729b6f" stroke-width="1.400" stroke-linejoin="round" />
        <g fill="none" stroke="#729b6f" stroke-width="1.300">
          {#each [[1251, 420], [1222, 545], [1315, 553], [1172, 678], [1436, 656], [1655, 509], [1400, 530], [1410, 562], [1592, 549], [723, 652], [1003, 531], [1640, 525], [1365, 486], [1140, 748]] as [x, y]}
            <ellipse cx={x} cy={y} rx="4.500" ry="3.500" /><path d="M{x - 6} {y - 3}l12 6M{x - 5} {y + 3}l10-7M{x} {y - 5}v10" />
          {/each}
        </g>
        <!-- Great Lakes -->
        <g transform="translate(1240 320) scale(.33333)" fill="#d3b236" stroke="#232323" stroke-width="3.500" stroke-linejoin="round">
          <path d="M105,193L140,170 200,132 240,120 283,102 290,82 308,74 325,75 337,55 345,70 358,65 350,48 362,45 380,54 420,60 465,63 478,85 500,110 565,113 555,142 580,152 573,178 595,180 597,195 582,192 584,206 556,202 552,190 500,195 460,197 440,208 412,204 396,186 360,183 335,184 330,178 343,160 380,148 350,150 330,162 305,178 250,188 215,198 190,196 188,180 150,186z" />
          <path d="M290,117l35-17 7 0-2 5-33 17z" fill="#fff" />
          <path d="M312,88l8-14 6 8 10-20 6 12 12-4-8 10-14 2-10 10z" fill="#b89a30" stroke-width="2.500" />
          <path d="M570,244L560,258 548,268 545,280 530,287 522,312 512,300 514,288 480,318 462,345 466,395 476,430 470,478 452,500 410,514 390,505 375,470 377,430 370,400 383,370 392,335 405,305 436,276 410,290 385,318 370,328 368,318 395,290 410,272 440,252 480,242 530,230z" />
          <path d="M575,236L620,238 652,237 612,228 600,200 610,213 690,225 770,231 830,240 850,270 872,280 873,305 892,316 868,330 830,322 812,315 790,290 762,284 792,318 762,355 762,402 718,426 710,380 690,362 662,365 645,380 625,382 625,370 650,350 662,325 658,290 635,268 590,255z" />
          <path d="M669,241l25-1 14 5 20 12 20 5 15-10-8-14-25-2-20 6zM765,231l5 14 8-10z" fill="#fff" />
          <path d="M655,507L680,485 690,465 700,452 718,455 716,470 692,475 705,492 718,490 745,470 785,452 855,447 920,435 945,434 930,450 900,465 840,490 790,515 730,527 690,522z" />
          <path d="M887,408L910,380 940,370 1000,365 1070,366 1105,350 1148,332 1130,350 1112,375 1112,392 1080,406 1000,405 940,403 900,412z" />
          <path d="M1028,357l25-5 18 2-8 14-20-4z" fill="#fff" />
          <path d="M1292,302l12 2-1 38-12-4-2-18zM1290,345l3,28M333,352l8,0 4,14-10,8zM0,215l14,0 0,12-10,4z" />
        </g>
        <!-- inland lakes and reservoirs -->
        <g fill="#d3b236" stroke="#202020" stroke-width="1.300" stroke-linejoin="round">
          <path d="M832,489L839,490 841,494 846,501 847.500,495 853.500,494 853,500 857,506 847.500,510.500 838.500,503 835,497z" />
          <path d="M1207,333l5-3 7 1 5 3-4 3-6 1-6-1zM1209,327l5-4 3,3 3,0-1,4-6,1zM1216,321l1-6 3 4M1222,325l6 3 5-3-4-6-8-2M1212,322l4,2M1210,356l6-1 6-3M1209,358l3-2 7,1-5,2z" />
          <path d="M683,543l4,0 0,3-3,1zM768,664l5,0 5,4-3,2zM1511,801l3-2 3,2 0,3-3,2-3-2zM969,356l4,1 3,6M886,432l4-2 2,4z" />
        </g>
        <g fill="none" stroke="#141414" stroke-width="2.300" stroke-linejoin="bevel">
          <path d="M936,365l4,1 1,3 2-4 5,0 4-2 10,0 3-3 6-1 4-3 2,3 2,7M973,358l5 6M1029,355l5,-1 3,3 4-4 9,1 4,4 4,2 0,3 6-2 4,5 10-1 5,1 4,-3M1050,353l6,8M1094,382l3,7-2,5 3,3-1,6 4,3-4,4 6,4-5,1 4,9-2,6-4,3-8,3 5,-1 6,4-1,-8M1083,425l5,0M863,590l5-3 4,2 4-3 6-1 4-4 1,-5 3-5M866,586l4,5M793,606l6,2 2-1 2-8 1,8 5,2 2-3 4,3 4,5M1356,590l6,3-3,5 3,3-1,7M1150,655l5,2-4,3M1168,620l7,2 6,4-5,3 6,0" />
        </g>
      </svg>
    </main>
  </div>

  <footer class="status">
    <div class="locate"><svg width="14" height="14"><circle cx="5" cy="5" r="4" fill="none" stroke="#888" stroke-width="1.300" /><path d="M8 8l5 5" stroke="#888" stroke-width="2" /></svg>Type to locate (Ctrl+K)</div>
    <span class="coord">Coordinate</span>
    <div class="field f1">-119.25,44.29</div>
    <svg class="mouse" width="22" height="24" viewBox="0 0 22 24"><path d="M4 3q4-4 7 1l3 7q6 2 5 8-3 6-9 3-3-3-2-8L3 9q-1-4 1-6z" fill="#111" /><path d="M6 3l3 6M9 3l2 5M9 14l7-3M3 17l4 4M16 4l5-2" stroke="#fff" stroke-width="1.500" /><circle cx="14" cy="18" r="3.500" fill="#fff" /><circle cx="14" cy="18" r="1.500" /><path d="M15 5l6-4M0 15l6 5" stroke="#111" stroke-dasharray="2 2" /></svg>
    <span class="scale">Scale</span>
    <div class="field f2">1:15965809<i class="drop"></i></div>
    <svg class="lock" width="18" height="24"><path d="M4 12V7q0-5 5-5t5 5v5" fill="none" stroke="#777" stroke-width="2.500" /><rect x="0" y="11" width="17" height="12" rx="2" fill="#666" /></svg>
    <span class="mag">Magnifier</span>
    <div class="field f3">100%<em><i class="tri up"></i><i class="tri"></i></em></div>
    <span class="rot">Rotation</span>
    <div class="field f4">0.0 °<em><i class="tri up"></i><i class="tri"></i></em></div>
    <span class="check rc"><svg width="14" height="14"><path d="M1.500 6l4 6L12 1" fill="none" stroke="#000" stroke-width="2.200" /></svg></span>
    <span class="render">Render</span>
    <svg class="crs" width="21" height="21" viewBox="0 0 21 21"><path d="M1 7q9-12 19 0v6H1zM4 14h13l-3 6H7z" fill="#777" /><path d="M0 9.500h21M0 13.500h21M7 2v17M14 2v17M2 6h17" stroke="#efefef" /></svg>
    <span>EPSG:4326</span>
    <svg class="bubble" width="22" height="22"><path d="M11 1q10 0 10 8.500 0 5-4 7l3 5-8-4Q1 18 1 9.500 1 1 11 1z" fill="#666" /><circle cx="6" cy="9.500" r="1.500" fill="#fff" /><circle cx="11" cy="9.500" r="1.500" fill="#fff" /><circle cx="16" cy="9.500" r="1.500" fill="#fff" /></svg>
  </footer>

  <div class="taskbar">
    <div class="start"><svg width="20" height="20"><path d="M0 3l8-1v7H0zM9 1.800L20 0v9H9zM0 10h8v8l-8-1zM9 10h11v10L9 18z" fill="#fff" /></svg></div>
    <div class="search">
      <svg width="34" height="34"><circle cx="17" cy="17" r="14.500" fill="none" stroke="#050505" stroke-width="3.500" /></svg>
      <span>在这里输入你要搜索的内容</span>
      <svg width="16" height="24"><rect x="4.500" y="1.500" width="7" height="14" rx="2" fill="none" stroke="#222" stroke-width="2" /><path d="M1.500 11v5q0 3 3 3h7q3 0 3-3v-5M8 19v4M4 22.500h8" fill="none" stroke="#222" stroke-width="1.500" /></svg>
    </div>
    <div class="tv"><svg width="26" height="26"><path d="M1 2v4h15V2M1 25v-4h15v4M2 9h13v9H2zM23 1v5M23 12v13" fill="none" stroke="#fff" stroke-width="1.300" /><path d="M21.500 8h4v4h-4z" fill="#fff" /></svg></div>
    {#each tasks as id}
      <div class="task {id}" class:run={id !== 'explorer' && id !== 'spiral'}>
        <svg width={id === 'explorer' ? 32 : 34} height="36" viewBox="-4 -4 32 32">{@html icons[id]}</svg>
      </div>
    {/each}
    <div class="tray">
      <span class="ch">CH</span><div class="up1">{@render icon('sogou', 22)}</div>
      <svg class="people" width="22" height="24"><g fill="none" stroke="#fff" stroke-width="1.700"><circle cx="7" cy="11" r="3.500" /><circle cx="15" cy="4.500" r="3.500" /><path d="M1 23q0-8 6-8t6 8M11 10q3-3 7-1 3 2 3 8" /></g></svg>
      <svg class="chev" width="18" height="12"><path d="M1 10l8-8 8 8" fill="none" stroke="#fff" stroke-width="1.800" /></svg>
      <svg class="peng" width="24" height="26"><ellipse cx="10" cy="13" rx="8" ry="11" fill="#111" /><path d="M3 12h14v11H3z" fill="#f4a" /><path d="M5 15h7v7H5z" fill="#fff" /><path d="M14 3l6-2-1 5z" fill="#f28" /><circle cx="8" cy="6" r="2" fill="#fff" /><circle cx="13" cy="6" r="2" fill="#fff" /><path d="M3 22h6v3H3zM11 22h6v3h-6zM12 13h11v8H12zM7 9h6v2H7z" fill="#fbba2f" /></svg>
      <svg class="bat" width="24" height="18"><path d="M8 4.500h13v10H7M21 8h2v4h-2M1 2v5h6V2M2.500 0v3M5.500 0v3M4 7v8" fill="none" stroke="#fff" stroke-width="1.500" /><path d="M10 7h8v5h-8z" fill="#fff" /></svg>
      <svg class="wifi" width="20" height="20"><g fill="none" stroke="#aab" stroke-width="1.500"><path d="M1 18Q2 3 18 1M5 18Q6 7 18 5M9 18q1-8 9-9M13 18q0-4 5-5" /></g><circle cx="16.500" cy="17.500" r="1.500" fill="#fff" /></svg>
      <svg class="spk" width="22" height="18"><path d="M1 6h4l5-5v16l-5-5H1z" fill="none" stroke="#fff" stroke-width="1.300" /><path d="M13 6q2 3 0 6M16 4q4 5 0 10M19 2q5 7 0 14" fill="none" stroke="#aab" stroke-width="1.300" /></svg>
      <span class="ying">英</span>
      <div class="sg2">{@render icon('sogou', 22)}</div>
      <div class="clock"><span>16:12</span><span>2020/3/26</span></div>
      <div class="note"><svg width="24" height="22"><path d="M0 0h22v17H12l-6 5v-5H0z" fill="#fff" /><path d="M4 6h14M4 11h14" stroke="#222838" stroke-width="1.500" /></svg><b>14</b></div>
    </div>
  </div>
</div>

<style>
  :global(body) { margin: 0; background: #efefef; }
  .screen { width: 1920px; height: 1080px; display: flex; flex-direction: column; overflow: hidden; background: #efefef; font: 18px/25px 'Open Sans', 'Noto Sans CJK SC', sans-serif; color: #000; }
  svg { display: block; flex: none; overflow: visible; }
  .title { height: 32px; flex: none; display: flex; align-items: center; background: #1883d7; color: #fff; padding: 0 0 2px 1px; box-sizing: border-box; }
  .title span { margin-left: 4px; font-size: 17.600px; line-height: 24px; letter-spacing: .04px; }
  .wins { margin-left: auto; display: flex; align-self: flex-start; height: 31px; border: solid #23425c; border-width: 0 1px 1px; box-sizing: border-box; }
  .win { width: 66px; display: flex; align-items: center; justify-content: center; border-right: 1px solid #23425c; }
  .win.b { width: 64px; }
  .win.c { width: 66px; background: #c45a4e; border-right: 0; }
  .menu { height: 27px; flex: none; display: flex; align-items: center; padding-left: 12.500px; border-bottom: 1px solid #d2d2d2; }
  .menu span { flex: none; white-space: nowrap; font-size: 17.600px; letter-spacing: -.15px; }
  .menu u { text-underline-offset: 3px; text-decoration-thickness: 1px; }
  .menu u.plain { text-decoration: none; }
  .toolbar { height: 38px; flex: none; display: flex; align-items: center; background: linear-gradient(#f8f8f8, #ededed); border-bottom: 1px solid #bcbcbc; }
  .toolbar.second { height: 37px; }
  .tool { height: 32px; flex: none; display: flex; align-items: center; justify-content: center; box-sizing: border-box; }
  .tool.off { opacity: .36; filter: grayscale(1); }
  .pressed { background: #dadada; border: 1px solid #aaa; border-radius: 3px; }
  .grip { width: 5px; height: 17px; background: radial-gradient(circle, #aaa .8px, transparent 1px) 0 0 / 2.500px 3px; }
  .sep { width: 1px; height: 19px; background: #ccc; }
  .drop { width: 0; height: 0; flex: none; border: 5px solid transparent; border-top: 6px solid #555; border-bottom: 0; }
  .work { flex: 1; min-height: 0; display: flex; }
  aside { width: 294px; display: flex; flex-direction: column; }
  .dock-head { height: 20px; flex: none; display: flex; align-items: center; padding: 0 0 0 4px; font-size: 17.300px; line-height: 19px; letter-spacing: -.1px; }
  .dock-head svg { margin-left: auto; }
  .mini { height: 31px; flex: none; display: flex; align-items: center; gap: 10.300px; padding: 0 0 2px 8px; box-sizing: border-box; }
  .mini.l .drop { margin: 0 -2px 0 -3px; }
  .browser { height: 413px; flex: none; display: flex; background: #fff; border: 1px solid #b0b0b0; border-left-color: #c5c5c5; box-sizing: border-box; overflow: hidden; }
  .items { width: 273px; }
  .item { width: 225px; height: 25px; display: flex; align-items: center; font-size: 17.300px; white-space: nowrap; }
  .item.hover { background: #efefef; }
  .item > i { width: 0; height: 0; margin: 0 14px 0 10px; border: 5px solid transparent; border-right: 0; border-left: 6px solid transparent; }
  .item > i.arrow { border-left-color: #666; }
  .item span { margin-left: 7px; }
  .scroll { width: 18px; border-left: 1px solid #b0b0b0; display: flex; flex-direction: column; }
  .sb { height: 18px; display: flex; align-items: center; justify-content: center; }
  .thumb { height: 274px; flex: none; background: #f8f8f8; border: solid #b5b5b5; border-width: 1px 0; box-sizing: border-box; }
  .track { flex: 1; background: #e3e3e3; border-bottom: 1px solid #b5b5b5; }
  .tri { width: 0; height: 0; border: 5.500px solid transparent; border-top: 6px solid #555; border-bottom: 0; }
  .tri.up { transform: rotate(180deg); }
  .hgrip { width: 16px; height: 2px; margin: 3px auto 3px 140px; background: radial-gradient(circle, #aaa .8px, transparent 1px) 0 0 / 3px 2px; }
  .layers { flex: 1; background: #fff; border: 1px solid #b0b0b0; box-sizing: border-box; }
  .layer { height: 26px; display: flex; align-items: center; padding-left: 30px; }
  .layer.sel { background: #efefef; }
  .layer.sel b { text-decoration: underline; text-underline-offset: 2px; text-decoration-thickness: 1px; }
  .layer > svg { margin-left: 5px; }
  .layer b { margin-left: 5px; font-size: 17px; letter-spacing: -.1px; }
  .layer b.in { margin-left: 7px; }
  .layer > i { margin-left: auto; width: 13px; height: 22px; background: #e2e2e2; }
  .check { width: 19px; height: 19px; flex: none; box-sizing: border-box; border: 1.500px solid #b8b8b8; background: #fff; display: flex; align-items: center; justify-content: center; }
  .vgrip { width: 4px; height: 18px; margin: 415px 2px 0 2px; background: radial-gradient(circle, #aaa .8px, transparent 1px) 0 0 / 3px 3px; }
  main { flex: none; width: 1618px; background: #fff; border: 1px solid #b5b5b5; box-sizing: border-box; overflow: hidden; }
  .status { height: 34px; flex: none; display: flex; align-items: center; border-bottom: 1px solid #bdbdbd; padding-top: 2px; box-sizing: border-box; font: 13.330px/20px 'Liberation Mono', monospace; white-space: nowrap; }
  .locate { width: 372px; height: 25px; margin-left: 4px; border: 1px solid #a8a8a8; border-radius: 3px; background: #fff; box-sizing: border-box; display: flex; align-items: center; color: #777; padding-left: 7px; gap: 7px; font-size: 14.800px; }
  .coord { margin-left: 472px; }
  .field { height: 25px; background: #fff; border: 1px solid #a8a8a8; border-radius: 3px; box-sizing: border-box; display: flex; align-items: center; padding-left: 4px; }
  .f1 { width: 119px; margin-left: 4px; padding-left: 6px; }
  .mouse { margin-left: 4px; }
  .scale { margin-left: 14px; }
  .f2 { width: 115px; margin-left: 3px; padding-left: 3px; }
  .f2 .drop { margin: 0 11px 0 auto; }
  .lock { margin-left: 13px; }
  .mag { margin-left: 8px; }
  .f3 { width: 113px; margin-left: 3px; }
  .f4 { width: 109px; margin-left: 8px; }
  .field em { margin-left: auto; width: 18px; height: 100%; border-left: 1px solid #bbb; display: flex; flex-direction: column; align-items: center; justify-content: center; gap: 4px; background: #f4f4f4; border-radius: 0 3px 3px 0; }
  .rot { margin-left: 8px; }
  .rc { margin-left: 7px; }
  .render { margin-left: 6px; }
  .crs { margin: 0 4px 0 18px; }
  .bubble { margin-left: 30px; }
  .taskbar { height: 57px; flex: none; display: flex; background: linear-gradient(90deg, #1b2130 547px, #1d2b35 700px, #20303a 820px, #242a30 1080px, #22272e 1260px, #1c2131 1400px, #1c2131); color: #fff; }
  .start { width: 67px; flex: none; display: flex; align-items: center; justify-content: center; background: #2a3033; padding-bottom: 2px; box-sizing: border-box; }
  .search { width: 480px; flex: none; box-sizing: border-box; padding: 0 21px 2px 12px; display: flex; align-items: center; background: #f1f1f1; color: #2b2b2b; font: 21px/30px 'Noto Sans CJK SC', sans-serif; }
  .search span { margin: -2px 0 0 12px; font-weight: 300; white-space: nowrap; }
  .search svg:last-child { margin-left: auto; }
  .tv { width: 64px; flex: none; display: flex; align-items: center; justify-content: center; padding-bottom: 2px; box-sizing: border-box; }
  .task { width: 66px; margin-right: 1px; flex: none; display: flex; align-items: center; justify-content: center; background-repeat: no-repeat; padding-bottom: 2px; box-sizing: border-box; }
  .cmd { width: 57px; }
  .code { width: 57px; margin-right: 5px; }
  .firefox, .chrome, .foxit, .ppt { margin-right: 2px; }
  .run { background-image: linear-gradient(#76b9ed, #76b9ed); background-size: 55px 3px; background-position: 50% 100%; }
  .cmd, .ppt { background-image: linear-gradient(90deg, #76b9ed 80%, #4d7595 80%); }
  .wing { background-color: #a9642c; background-image: linear-gradient(#ff7300, #ff7300); background-size: 100% 3px; }
  .q { background-color: #4d5158; background-size: 100% 3px; margin-right: 0; }
  .tray { flex: 1; display: flex; align-items: center; padding-bottom: 2px; }
  .ch { font: 16px 'Liberation Mono', monospace; letter-spacing: -1.500px; margin: -24px 0 0 14px; }
  .up1 { margin: -28px 0 0 9px; }
  .people { margin-left: 52px; }
  .chev { margin-left: 29px; }
  .peng { margin-left: 13px; }
  .bat { margin-left: 10px; }
  .wifi { margin-left: 11px; }
  .spk { margin-left: 11px; }
  .ying { margin-left: 11px; font: 21px/28px 'Noto Sans CJK SC', sans-serif; }
  .sg2 { margin-left: 20px; }
  .clock { width: 90px; margin-left: 22px; display: flex; flex-direction: column; align-items: center; font: 17px/27px 'Open Sans', sans-serif; letter-spacing: -.1px; }
  .note { position: relative; margin: -2px 0 0 25px; }
  .note b { position: absolute; left: 7px; top: 11px; width: 25px; height: 25px; border-radius: 50%; background: #33373f; border: 1px solid #888; font: bold 15px/25px 'Open Sans', sans-serif; text-align: center; }
</style>
